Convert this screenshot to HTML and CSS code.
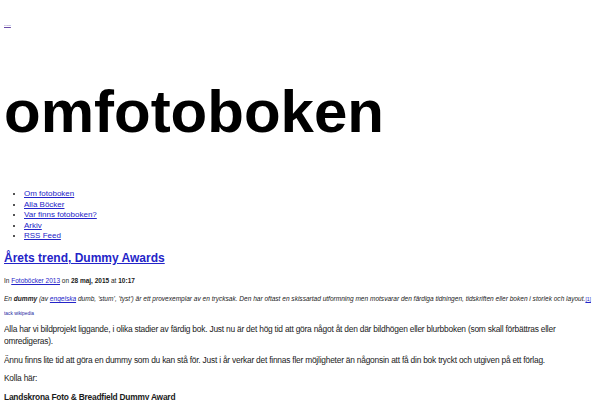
FILE: index.html
```html
<!DOCTYPE html>
<html lang="sv">
<head>
<meta charset="utf-8">
<title>omfotoboken</title>
<link rel="stylesheet" href="styles.css">
</head>
<body>
<a class="skip" href="#content">Till innehåll</a>
<header class="site-header">
  <h1 class="site-title">omfotoboken</h1>
  <ul class="nav">
    <li><a href="#">Om fotoboken</a></li>
    <li><a href="#">Alla Böcker</a></li>
    <li><a href="#">Var finns fotoboken?</a></li>
    <li><a href="#">Arkiv</a></li>
    <li><a href="#">RSS Feed</a></li>
  </ul>
</header>
<main id="content">
  <h2 class="post-title"><a href="#">Årets trend, Dummy Awards</a></h2>
  <p class="meta">In <a href="#">Fotoböcker 2013</a> on <b>28 maj, 2015</b> at <b>10:17</b></p>
  <p class="quote">En <b>dummy</b> (av <a href="#">engelska</a> dumb, ’stum’, ’tyst’) är ett provexemplar av en trycksak. Den har oftast en skissartad utformning men motsvarar den färdiga tidningen, tidskriften eller boken i storlek och layout.<a class="ref" href="#">[1]</a></p>
  <p class="credit">tack wikipedia</p>
  <p class="body">Alla har vi bildprojekt liggande, i olika stadier av färdig bok. Just nu är det hög tid att göra något åt den där bildhögen eller blurbboken (som skall förbättras eller omredigeras).</p>
  <p class="body">Ännu finns lite tid att göra en dummy som du kan stå för. Just i år verkar det finnas fler möjligheter än någonsin att få din bok tryckt och utgiven på ett förlag.</p>
  <p class="body">Kolla här:</p>
  <p class="body"><b>Landskrona Foto &amp; Breadfield Dummy Award</b></p>
</main>
</body>
</html>
```
FILE: styles.css
```css
body {
  margin: 4px;
  font-family: "Liberation Sans", Arial, sans-serif;
  color: #1a1a1a;
  background: #fff;
}
a { color: #2424c8; }
.skip {
  display: block;
  width: 9px;
  font-size: 1.4px;
  line-height: 8px;
  margin-top: 18px;
  color: #6a4aa8;
}
.site-title {
  font-size: 60px;
  font-weight: bold;
  margin: 52px 0 47px;
  line-height: 1;
  color: #000;
}
.nav {
  margin: 0;
  padding-left: 20px;
  font-size: 8px;
  line-height: 10.5px;
}
.post-title {
  font-size: 12px;
  line-height: 14px;
  margin: 9.5px 0 12px;
}
.meta {
  font-size: 6.5px;
  line-height: 8px;
  margin: 0 0 10px;
}
.quote {
  font-size: 6.55px;
  line-height: 8px;
  font-style: italic;
  margin: 0 0 8px;
  color: #222;
  white-space: nowrap;
}
.ref { font-size: 5px; font-style: normal; }
.credit {
  font-size: 4.8px;
  line-height: 6px;
  color: #2424a0;
  margin: 0 0 6px;
}
.body {
  font-size: 8.4px;
  letter-spacing: -0.22px;
  line-height: 12px;
  margin: 0 0 6.5px;
}
```
